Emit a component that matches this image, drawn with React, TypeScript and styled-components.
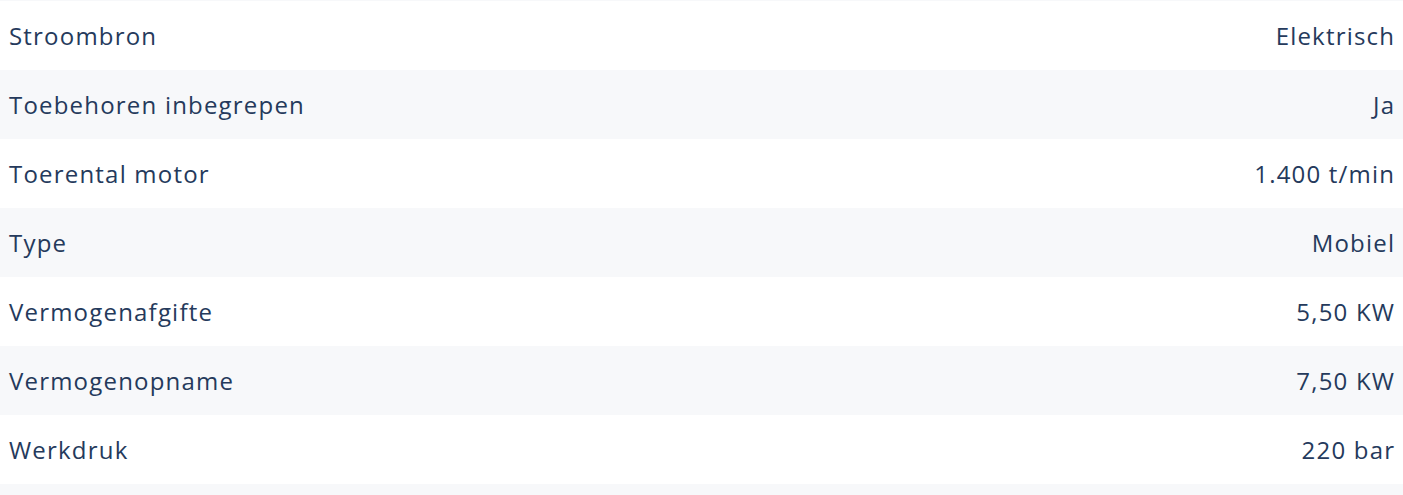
import React from 'react';
import styled, { createGlobalStyle } from 'styled-components';

const GlobalStyle = createGlobalStyle`
  html, body {
    margin: 0;
    padding: 0;
    background: #ffffff;
  }
`;

const SpecList = styled.div`
  display: flex;
  flex-direction: column;
  width: 100%;
  border-top: 1px solid #f7f8fa;
  font-family: 'Open Sans', 'Liberation Sans', sans-serif;
  color: #253a5c;
`;

const SpecRow = styled.div<{ $striped: boolean }>`
  display: flex;
  justify-content: space-between;
  align-items: center;
  height: 69px;
  padding: 0 9px;
  background-color: ${(p) => (p.$striped ? '#f7f8fa' : '#ffffff')};
  font-size: 24px;
  letter-spacing: 1.2px;
`;

const Label = styled.span``;
const Value = styled.span`
  text-align: right;
  margin-right: -1.2px; // trailing letter-spacing
`;

const specs: [string, string][] = [
  ['Stroombron', 'Elektrisch'],
  ['Toebehoren inbegrepen', 'Ja'],
  ['Toerental motor', '1.400 t/min'],
  ['Type', 'Mobiel'],
  ['Vermogenafgifte', '5,50 KW'],
  ['Vermogenopname', '7,50 KW'],
  ['Werkdruk', '220 bar'],
  ['', ''],
];

export default function App() {
  return (
    <>
      <GlobalStyle />
      <SpecList>
        {specs.map(([label, value], i) => (
          <SpecRow key={i} $striped={i % 2 === 1}>
            <Label>{label}</Label>
            <Value>{value}</Value>
          </SpecRow>
        ))}
      </SpecList>
    </>
  );
}
